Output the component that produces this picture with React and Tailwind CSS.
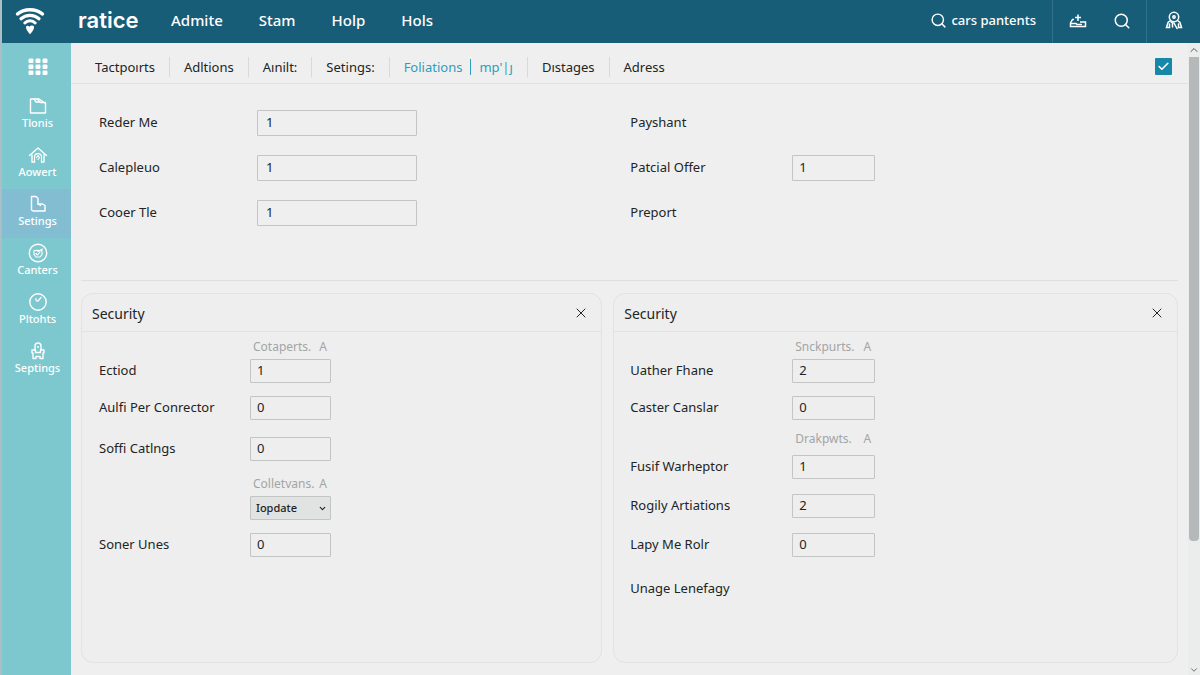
import { Search, X, Check, ChevronUp, ChevronDown } from 'lucide-react'

const NAV = ['Admite', 'Stam', 'Holp', 'Hols']

const SIDEBAR = [
  { label: 'Tlonis', icon: FolderIcon },
  { label: 'Aowert', icon: HomeIcon },
  { label: 'Setings', icon: ShapeIcon, active: true },
  { label: 'Canters', icon: BadgeIcon },
  { label: 'Pltohts', icon: ClockIcon },
  { label: 'Septings', icon: LockIcon },
]

const TABS = [
  { label: 'Tactpoırts' },
  { label: 'Adltions' },
  { label: 'Aınilt:' },
  { label: 'Setings:' },
  { label: 'Foliations', sub: "mp'|ȷ", active: true },
  { label: 'Dıstages' },
  { label: 'Adress' },
]

const GENERAL_LEFT = [
  { label: 'Reder Me', value: '1' },
  { label: 'Calepleuo', value: '1' },
  { label: 'Cooer Tle', value: '1' },
]

const GENERAL_RIGHT = [
  { label: 'Payshant' },
  { label: 'Patcial Offer', value: '1' },
  { label: 'Preport' },
]

const SECURITY_LEFT = [
  { label: 'Ectiod', value: '1', hint: 'Cotaperts.', hintSpace: 'mb-1' },
  { label: 'Aulfi Per Conrector', value: '0', space: 'mt-[13px]' },
  { label: 'Soffi Catlngs', value: '0', space: 'mt-[17px]' },
  { select: 'Iopdate', hint: 'Colletvans.', hintSpace: 'mb-1', space: 'mt-[15px]' },
  { label: 'Soner Unes', value: '0', space: 'mt-[13px]' },
]

const SECURITY_RIGHT = [
  { label: 'Uather Fhane', value: '2', hint: 'Snckpurts.', hintSpace: 'mb-1' },
  { label: 'Caster Canslar', value: '0', space: 'mt-[13px]' },
  { label: 'Fusif Warheptor', value: '1', hint: 'Drakpwts.', hintSpace: 'mb-2', space: 'mt-[11px]' },
  { label: 'Rogily Artiations', value: '2', space: 'mt-[15px]' },
  { label: 'Lapy Me Rolr', value: '0', space: 'mt-[15px]' },
  { label: 'Unage Lenefagy', space: 'mt-5' },
]

function WifiLogo() {
  return (
    <svg width="30" height="28" viewBox="0 0 30 28" fill="none" stroke="white" strokeLinecap="round">
      <path d="M2.500 7C9 1.300 21 1.300 27.500 7" strokeWidth="3.400" />
      <path d="M6 11.800C11 7.300 19 7.300 24 11.800" strokeWidth="3.200" />
      <path d="M9.800 16C12.500 13 17.500 13 20.200 16" strokeWidth="3" />
      <path d="M11 19.500c1.200-1 2.600-.8 3.500.3 1.200-1.800 3.700-1.500 4.500-.3.500 2.700-2 5.500-4 7.800-2-2.300-4.400-5-4-7.800z" fill="white" stroke="none" />
    </svg>
  )
}

function GridIcon() {
  return (
    <svg width="20" height="18" viewBox="0 0 20 18" fill="white">
      {[0, 7, 14].map(x => [0, 6, 12].map(y => (
        <rect key={`${x}-${y}`} x={x + 0.500} y={y + 0.500} width="5" height="4.500" rx="1.200" />
      )))}
    </svg>
  )
}

function SideSvg({ children }) {
  return (
    <svg width="20" height="20" viewBox="0 0 20 20" fill="none" stroke="white" strokeWidth="1.400" strokeLinejoin="round" strokeLinecap="round">
      {children}
    </svg>
  )
}

function FolderIcon() {
  return (
    <SideSvg>
      <path d="M2.500 3h8.500l6.500 4.500V17h-15z" />
      <path d="M6 3l2 3h3.500M9 3l3.500 3.500h5" />
    </SideSvg>
  )
}

function HomeIcon() {
  return (
    <SideSvg>
      <path d="M1.500 10.500L10 3l8.500 7.500M4 10v7h2.500M16 10v7h-2.500" />
      <path d="M6.500 17v-5c0-4.500 7-4.500 7 0v5M8.500 12.500L10 10.500l1.500 2L10 14.500" strokeWidth="1.200" />
    </SideSvg>
  )
}

function ShapeIcon() {
  return (
    <SideSvg>
      <path d="M3.500 2.500h4.500l2 2v5.500h4.500l2.500 1.500v5.500H5l-1.500-1z" />
      <path d="M10 10l2.500 1.500" />
    </SideSvg>
  )
}

function BadgeIcon() {
  return (
    <SideSvg>
      <circle cx="10" cy="10" r="8.700" />
      <path d="M6 7.500h8M6 7.500v4l2 2.500h4l2-2.500v-4M8 10.500l1.500 1.500L12 9M9 7l1 1.500L14.500 6" strokeWidth="1.100" />
    </SideSvg>
  )
}

function ClockIcon() {
  return (
    <SideSvg>
      <circle cx="10" cy="10" r="8.200" />
      <path d="M8 6.500c-.5 2 .5 3 2 2.500L13 5.500" strokeWidth="1.200" />
    </SideSvg>
  )
}

function LockIcon() {
  return (
    <SideSvg>
      <path d="M7 8.500V5c0-4 6-4 6 0v3.500" />
      <path d="M4 9h3.500v2.500h5V9H16v3h-1v5.500h-3V15.500H8v2H5V12H4z" />
      <path d="M9.500 6h1" />
    </SideSvg>
  )
}

function TrayIcon() {
  return (
    <svg width="18" height="16" viewBox="0 0 18 16" fill="none" stroke="white" strokeWidth="1.500">
      <path d="M5 6.500H3.500L1.500 10v3.500h15V9H11" />
      <path d="M2 10.500h5l1 1h5M9 1.500V8M6 4.500h6" />
    </svg>
  )
}

function UserIcon() {
  return (
    <svg width="18" height="20" viewBox="0 0 18 20" fill="none" stroke="white" strokeWidth="1.500" strokeLinecap="round">
      <circle cx="9" cy="6" r="4.700" />
      <circle cx="9" cy="6" r="1.200" />
      <path d="M5.500 9.500L3 11.500 1.500 16.500h3V13M12.500 9.500l2.500 2 1.500 5h-3V13M6 11l1.500 1v4M9 12l3 5.500" />
    </svg>
  )
}

function TopBar() {
  return (
    <header className="flex h-[43px] items-center bg-[#185d77] pb-0.5 text-white">
      <a href="#" aria-label="Home" className="ml-[13px] w-[63px]"><WifiLogo /></a>
      <a href="#" className="w-[93px] pb-0.5 font-['Inter'] text-[22px] font-semibold leading-6">ratice</a>
      <nav className="flex flex-1 items-center gap-9 text-[15px] font-medium">
        {NAV.map(item => <a key={item} href="#">{item}</a>)}
      </nav>
      <button className="flex items-center gap-1 pr-4 text-[13px] font-medium">
        <Search size={17} />
        cars pantents
      </button>
      <div className="-mb-0.5 flex items-center self-stretch border-l border-[#30708a] pb-0.5 pr-[5px]">
        <button aria-label="Tray" className="flex w-[50px] justify-center"><TrayIcon /></button>
        <button aria-label="Search" className="flex w-[38px] justify-center"><Search size={18} /></button>
      </div>
      <div className="-mb-0.5 flex items-center self-stretch border-l border-[#30708a] pb-0.5 pl-[18px] pr-[17px]">
        <button aria-label="Account"><UserIcon /></button>
      </div>
    </header>
  )
}

function Sidebar() {
  return (
    <aside className="flex w-[69px] shrink-0 flex-col bg-[#7cc8ce] text-white">
      <button aria-label="Apps" className="flex h-12 items-center justify-center pl-0.5"><GridIcon /></button>
      <nav className="flex flex-col">
        {SIDEBAR.map(({ label, icon: Icon, active }) => (
          <a
            key={label}
            href="#"
            className={active
              ? 'flex h-[49px] flex-col items-center pt-[5px] pl-0.5 bg-[#82bdd2] text-[11px] font-medium leading-[14px]'
              : 'flex h-[49px] flex-col items-center pt-[5px] pl-0.5 text-[11px] font-medium leading-[14px]'}
          >
            <Icon />
            {label}
          </a>
        ))}
      </nav>
    </aside>
  )
}

function Tabs() {
  return (
    <div className="flex h-[41px] items-center border-b border-[#e0e1e1] pl-[10px] pr-4 pt-[7px]">
      <nav className="flex flex-1 items-center divide-x divide-[#d8dada] text-[13px] leading-5">
        {TABS.map(tab => (
          <a key={tab.label} href="#" className={tab.active ? 'flex px-[14px] text-[#2f9dbd]' : 'px-[14px]'}>
            {tab.label}
            {tab.sub && <span className="my-0.5 ml-2 border-l border-[#2f9dbd] pl-2 leading-4">{tab.sub}</span>}
          </a>
        ))}
      </nav>
      <label className="relative flex">
        <input type="checkbox" defaultChecked aria-label="Enabled" className="size-[17px] appearance-none rounded-[1px] bg-[#1787a8]" />
        <Check size={13} strokeWidth={3} className="pointer-events-none absolute left-0.5 top-0.5 text-white" />
      </label>
    </div>
  )
}

function Field({ id, field, labelWidth, inputWidth, inputHeight, pad }) {
  const { label, value, select, hint, hintSpace, space } = field
  return (
    <div className={space}>
      {hint && (
        <div className={`flex text-xs leading-4 text-[#a3a5a5] ${hintSpace}`}>
          <span className={labelWidth} />
          <span className={`flex justify-between pl-[3px] pr-1 ${inputWidth}`}>
            <span>{hint}</span>
            <span>A</span>
          </span>
        </div>
      )}
      <div className={`flex items-center ${inputHeight}`}>
        <label htmlFor={id} className={`shrink-0 ${labelWidth}`}>{label}</label>
        {value && (
          <input id={id} defaultValue={value} className={`h-full rounded-[1px] border border-[#c3c5c5] bg-transparent pb-0.5 ${pad} ${inputWidth}`} />
        )}
        {select && (
          <span className={`relative h-full ${inputWidth}`}>
            <select id={id} aria-label={hint} className="h-full w-full appearance-none rounded-[1px] border border-[#c3c5c5] bg-[#e1e2e2] pl-[5px] text-[11px] font-medium">
              <option>{select}</option>
            </select>
            <ChevronDown size={9} strokeWidth={3} className="pointer-events-none absolute right-1 top-2" />
          </span>
        )}
      </div>
    </div>
  )
}

function General() {
  return (
    <section className="mx-2.5 grid grid-cols-[12fr_13fr] gap-[11px] border-b border-[#dedfdf] pb-[54px] pt-[26px] text-[13px]">
      <div className="flex flex-col gap-[19px] pl-[18px]">
        {GENERAL_LEFT.map((field, i) => (
          <Field key={field.label} id={`general-${i}`} field={field} labelWidth="w-[158px]" inputWidth="w-40" inputHeight="h-[26px]" pad="px-2" />
        ))}
      </div>
      <div className="flex flex-col gap-[19px] pl-[17px]">
        {GENERAL_RIGHT.map((field, i) => (
          <Field key={field.label} id={`offer-${i}`} field={field} labelWidth="w-[162px]" inputWidth="w-[83px]" inputHeight="h-[26px]" pad="px-1.5" />
        ))}
      </div>
    </section>
  )
}

function Card({ name, fields, labelWidth, inputWidth, bodyPad }) {
  return (
    <section className="rounded-xl border border-[#e1e2e2] bg-[#eeeeee]">
      <div className="flex h-[38px] items-center justify-between border-b border-[#e1e2e2] pl-2.5 pr-3">
        <h2 className="pt-0.5 text-sm">Security</h2>
        <button aria-label="Close"><X size={16} strokeWidth={1.500} /></button>
      </div>
      <div className={`pb-10 pt-[7px] text-[13px] ${bodyPad}`}>
        {fields.map((field, i) => (
          <Field key={i} id={`${name}-${i}`} field={field} labelWidth={labelWidth} inputWidth={inputWidth} inputHeight="h-6" pad="px-1.5" />
        ))}
      </div>
    </section>
  )
}

function ScrollRail() {
  return (
    <div className="flex w-3 shrink-0 flex-col items-center bg-[#ebecec]">
      <ChevronUp size={12} className="my-px shrink-0 text-[#555555]" />
      <div className="w-[10px] flex-[39] rounded-b bg-[#b6b9b9]" />
      <div className="flex-[10]" />
      <ChevronDown size={10} className="shrink-0 text-[#555555]" />
    </div>
  )
}

export default function App() {
  return (
    <div className="flex min-h-screen flex-col border-l-2 border-[#a9bfc6] bg-[#efefef] font-['Noto_Sans',sans-serif] text-[#222425]">
      <TopBar />
      <div className="flex flex-1">
        <Sidebar />
        <main className="flex flex-1 flex-col">
          <Tabs />
          <General />
          <div className="mx-2.5 mb-3 mt-3 grid flex-1 grid-cols-[12fr_13fr] gap-[11px]">
            <Card name="left" fields={SECURITY_LEFT} labelWidth="w-[151px]" inputWidth="w-[81px]" bodyPad="pl-[17px]" />
            <Card name="right" fields={SECURITY_RIGHT} labelWidth="w-[162px]" inputWidth="w-[83px]" bodyPad="pl-4" />
          </div>
        </main>
        <ScrollRail />
      </div>
    </div>
  )
}
